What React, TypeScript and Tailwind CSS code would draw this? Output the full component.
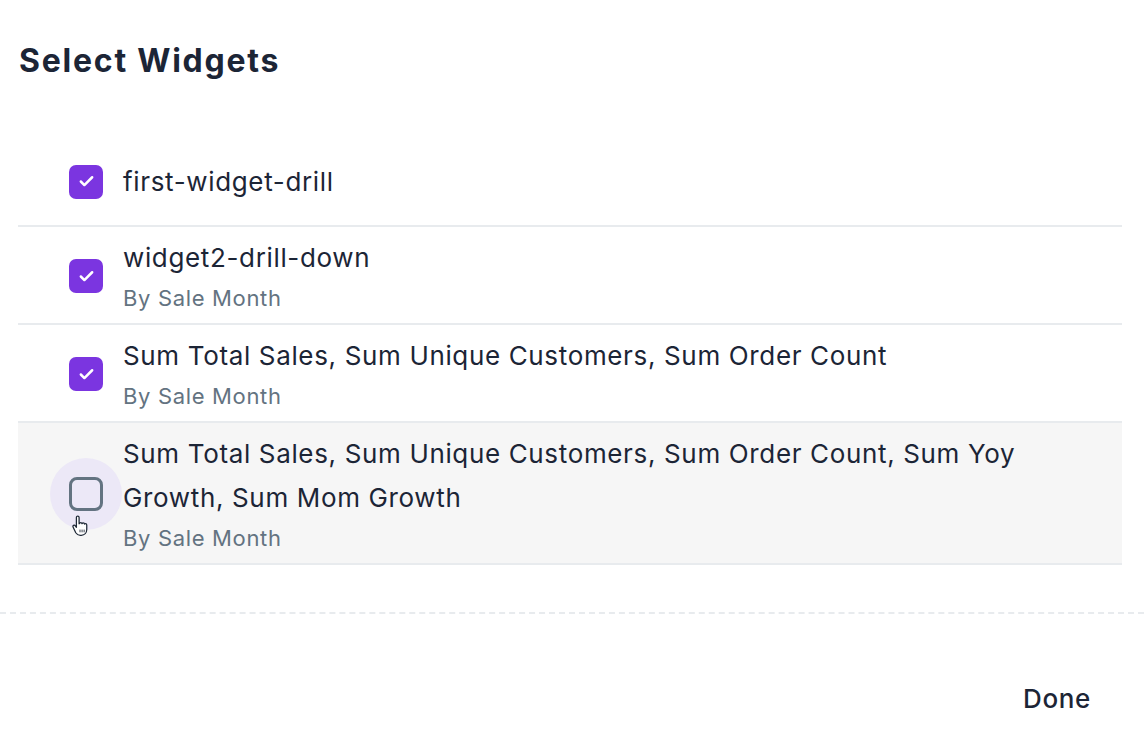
import { Check } from 'lucide-react';

type Widget = {
    id: string;
    title: string;
    subtitle?: string;
    checked: boolean;
    hovered?: boolean;
};

const widgets: Widget[] = [
    { id: 'w1', title: 'first-widget-drill', checked: true },
    { id: 'w2', title: 'widget2-drill-down', subtitle: 'By Sale Month', checked: true },
    {
        id: 'w3',
        title: 'Sum Total Sales, Sum Unique Customers, Sum Order Count',
        subtitle: 'By Sale Month',
        checked: true,
    },
    {
        id: 'w4',
        title: 'Sum Total Sales, Sum Unique Customers, Sum Order Count, Sum Yoy Growth, Sum Mom Growth',
        subtitle: 'By Sale Month',
        checked: false,
        hovered: true,
    },
];

// the pointer cursor sitting over the hovered checkbox
function HandCursor() {
    return (
        <svg width="18" height="22" viewBox="0 0 20 24" className="absolute left-[2px] top-[38px]">
            <path
                d="M6 2.5c0-1 .7-1.6 1.5-1.6S9 1.5 9 2.5v7l.3-.1c.2-.8.8-1.2 1.5-1.2s1.3.5 1.4 1.2c.3-.6.8-.9 1.4-.9.8 0 1.4.6 1.4 1.4.3-.3.7-.5 1.1-.5.8 0 1.4.6 1.4 1.4v5.2c0 3.6-2.6 6.3-6 6.3h-1.2c-2.3 0-3.8-1-5-2.8L2.4 13.4c-.5-.8-.3-1.7.4-2.1.7-.4 1.5-.2 2 .5L6 13.5z"
                fill="#ffffff"
                stroke="#1f2937"
                strokeWidth="1.4"
                strokeLinejoin="round"
            />
            <path d="M10 16v3M12.3 16v3M14.6 16v3" stroke="#1f2937" strokeWidth="1" />
        </svg>
    );
}

function WidgetRow({ widget, first }: { widget: Widget; first: boolean }) {
    return (
        <li
            className={`flex items-center border-b-2 border-[#e8ebee] ${
                widget.hovered ? 'bg-[#f6f6f6]' : ''
            } ${first ? 'h-[91px] pt-[2px]' : 'pt-[9px] pb-[7px]'}`}
        >
            <div className="relative ml-[51px] mr-[20px] w-[34px] h-[34px] shrink-0">
                {widget.hovered && (
                    <div className="absolute -left-[19px] -top-[19px] w-[72px] h-[72px] rounded-full bg-[#ece8f7]" />
                )}
                {widget.checked ? (
                    <div className="relative w-[34px] h-[34px] rounded-[7px] bg-[#7b35e0] flex items-center justify-center">
                        <Check size={17} strokeWidth={3.5} className="text-white" />
                    </div>
                ) : (
                    <div className="relative w-[34px] h-[34px] rounded-[8px] border-[3px] border-[#637381]" />
                )}
                {widget.hovered && <HandCursor />}
            </div>
            <div className="flex-1 pr-[90px]">
                <div className="text-[26px] leading-[44px] tracking-[0.025em] text-[#1c2536]">{widget.title}</div>
                {widget.subtitle && (
                    <div className="text-[22px] leading-[36px] tracking-[0.03em] text-[#637381]">
                        {widget.subtitle}
                    </div>
                )}
            </div>
        </li>
    );
}

export default function App() {
    return (
        <div className="w-[1144px] h-[752px] bg-white font-['Inter',sans-serif] overflow-hidden">
            <h2 className="pl-[19px] pt-[37px] text-[32px] leading-[48px] tracking-[0.055em] font-bold text-[#1c2536]">
                Select Widgets
            </h2>

            <ul className="mt-[51px] ml-[18px] w-[1104px]">
                {widgets.map((w, i) => (
                    <WidgetRow key={w.id} widget={w} first={i === 0} />
                ))}
            </ul>

            <div className="mt-[47px] border-t-2 border-dashed border-[#e8ebee]" />

            <div className="flex justify-end pr-[37px] pt-[61px]">
                <button className="px-4 text-[26px] leading-[48px] tracking-[0.025em] font-medium text-[#1c2536]">
                    Done
                </button>
            </div>
        </div>
    );
}
